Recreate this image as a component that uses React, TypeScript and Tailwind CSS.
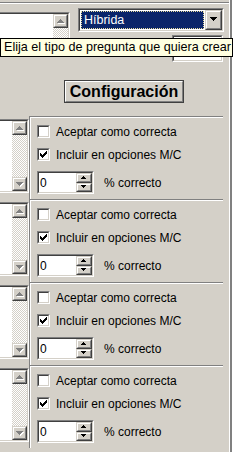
import React from "react"

// ── Win classic bevels ────────────────────────────────────────────────────────

interface BoxProps {
  className?: string
  inner?:     string
  children?:  React.ReactNode
}

function Sunken({ className = "", inner = "", children }: BoxProps) {
  return (
    <div className={`border border-t-[#808080] border-l-[#808080] border-b-white border-r-white ${className}`}>
      <div className={`h-full w-full border border-t-[#404040] border-l-[#404040] border-b-[#d4d0c8] border-r-[#d4d0c8] ${inner}`}>
        {children}
      </div>
    </div>
  )
}

function Raised({ className = "", inner = "", children }: BoxProps) {
  return (
    <div className={`border border-t-[#d4d0c8] border-l-[#d4d0c8] border-b-[#404040] border-r-[#404040] ${className}`}>
      <div className={`flex h-full w-full items-center justify-center border border-t-white border-l-white border-b-[#808080] border-r-[#808080] bg-[#d4d0c8] ${inner}`}>
        {children}
      </div>
    </div>
  )
}

const UP   = "M3 0h1v1h-1z M2 1h3v1h-3z M1 2h5v1h-5z M0 3h7v1h-7z"
const DOWN = "M0 0h7v1h-7z M1 1h5v1h-5z M2 2h3v1h-3z M3 3h1v1h-1z"
const UP_S   = "M2 0h1v1h-1z M1 1h3v1h-3z M0 2h5v1h-5z"
const DOWN_S = "M0 0h5v1h-5z M1 1h3v1h-3z M2 2h1v1h-1z"

function Tri({ d, disabled, small }: { d: string; disabled?: boolean; small?: boolean }) {
  return (
    <svg width={small ? 6 : 8} height={small ? 4 : 5} viewBox={small ? "0 0 6 4" : "0 0 8 5"} shapeRendering="crispEdges">
      {disabled && <path d={d} fill="#fff" transform="translate(1 1)" />}
      <path d={d} fill={disabled ? "#808080" : "#000"} />
    </svg>
  )
}

function ScrollBar() {
  return (
    <div className="flex w-[15px] shrink-0 flex-col">
      <Raised className="h-[14px] w-full">
        <Tri d={UP} disabled />
      </Raised>
      <div className="flex-1 bg-[image:repeating-conic-gradient(#d4d0c8_0%_25%,#ffffff_0%_50%)] bg-[length:2px_2px]" />
      <Raised className="h-[14px] w-full">
        <Tri d={DOWN} disabled />
      </Raised>
    </div>
  )
}

function CheckBox({ checked }: { checked?: boolean }) {
  return (
    <Sunken className="h-[13px] w-[13px] shrink-0" inner="flex items-center justify-center bg-white">
      {checked && (
        <svg width="7" height="7" viewBox="0 0 7 7" shapeRendering="crispEdges">
          <path
            d="M6 0h1v1h-1z M5 1h2v1h-2z M0 2h1v1h-1z M4 2h3v1h-3z M0 3h2v1h-2z M3 3h3v1h-3z M0 4h5v1h-5z M1 5h3v1h-3z M2 6h1v1h-1z"
            fill="#000"
          />
        </svg>
      )}
    </Sunken>
  )
}

function CheckRow({ label, checked, className = "" }: { label: string; checked?: boolean; className?: string }) {
  return (
    <div className={`flex h-[13px] items-center gap-[6px] leading-none ${className}`}>
      <CheckBox checked={checked} />
      <span>{label}</span>
    </div>
  )
}

function Spin() {
  return (
    <Sunken className="h-[23px] w-[57px]" inner="flex bg-white">
      <div className="flex flex-1 items-center pl-[1px] leading-none">0</div>
      <div className="flex w-[16px] flex-col">
        <Raised className="flex-1 w-full">
          <Tri d={UP_S} small />
        </Raised>
        <Raised className="flex-1 w-full">
          <Tri d={DOWN_S} small />
        </Raised>
      </div>
    </Sunken>
  )
}

// ── One answer block ──────────────────────────────────────────────────────────

function Answer() {
  return (
    <div className="flex h-[83px] shrink-0">
      <Sunken className="mt-[3px] h-[74px] w-[29px] border-l-0" inner="flex border-l-0 bg-white">
        <div className="flex-1" />
        <ScrollBar />
      </Sunken>
      <div className="h-full w-[194px] border-l border-t border-[#808080]">
        <div className="flex h-full flex-col border-l border-t border-white pl-[6px] pt-[7px]">
          <CheckRow label="Aceptar como correcta" />
          <CheckRow label="Incluir en opciones M/C" checked className="mt-[10px]" />
          <div className="mt-[10px] flex items-center">
            <Spin />
            <span className="ml-[10px] leading-none">% correcto</span>
          </div>
        </div>
      </div>
    </div>
  )
}

export default function App() {
  return (
    <div className="relative flex h-[452px] w-[248px] overflow-hidden bg-white font-['Liberation_Sans',Arial,sans-serif] text-[12px] text-black">
      <div className="flex w-[229px] shrink-0 flex-col bg-[#d4d0c8]">
        {/* Header: question text, type select, config button */}
        <div className="flex h-[116px] shrink-0 flex-col">
          <div className="mt-[2px] h-[1px] bg-[#808080]" />
          <div className="h-[1px] bg-white" />
          <div className="flex h-[58px]">
            <Sunken className="mt-[8px] h-[44px] w-[70px] border-l-0" inner="flex border-l-0 bg-white">
              <div className="flex-1" />
              <ScrollBar />
            </Sunken>
            <div className="ml-[8px] flex w-[146px] flex-col pt-[4px]">
              <Sunken className="h-[24px] w-full" inner="flex bg-white">
                <div className="flex-1 p-[1px]">
                  <div className="flex h-full items-center border border-dotted border-[#e8dca0] bg-[#0a246a] pl-[2px] text-[12.5px] leading-none text-white">
                    Híbrida
                  </div>
                </div>
                <Raised className="h-full w-[17px]">
                  <Tri d={DOWN} />
                </Raised>
              </Sunken>
              <Sunken className="ml-[94px] mt-[3px] h-[28px] w-[51px]" inner="bg-white" />
            </div>
          </div>
          <div className="ml-[64px] mt-[18px] h-[23px] w-[120px] border border-[#404040]">
            <div className="flex h-full items-center justify-center border border-t-white border-l-white border-b-[#808080] border-r-[#808080] pt-[1px] text-[16px] font-bold leading-none">
              Configuración
            </div>
          </div>
        </div>

        <Answer />
        <Answer />
        <Answer />
        <Answer />
      </div>
      <div className="w-[1px] shrink-0 bg-white" />
      <div className="w-[2px] shrink-0 bg-[#808080]" />
      <div className="flex-1 bg-white" />

      {/* Tooltip */}
      <div className="absolute left-0 top-[38px] flex h-[19px] w-[233px] items-center border border-black bg-[#ffffe1] pl-[3px] text-[12.6px] leading-none">
        Elija el tipo de pregunta que quiera crear
      </div>
    </div>
  )
}
